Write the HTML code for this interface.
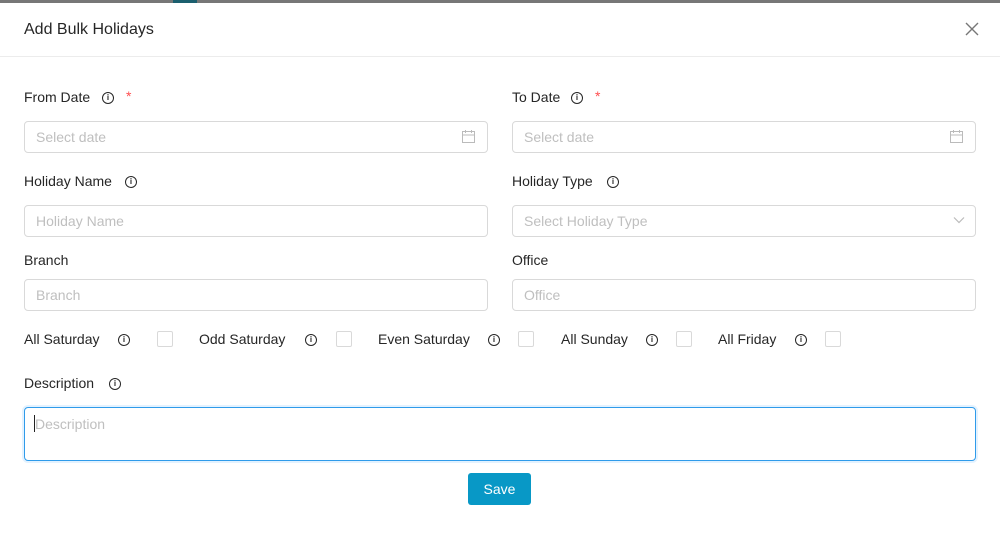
<!DOCTYPE html>
<html><head><style>
body{margin:0;width:1000px;height:540px;background:#fff;font-family:"Liberation Sans",sans-serif;color:#262626;position:relative;overflow:hidden;font-size:14px}
.topbar{position:absolute;left:0;top:0;width:1000px;height:3px;background:#777}
.topbar i{position:absolute;left:173px;top:0;width:24px;height:3px;background:#1b5f6e}
.a{position:absolute}
.lbl{position:absolute;font-size:14px;color:#262626;line-height:20px}
.info{display:inline-block;width:10px;height:10px;border:1.3px solid #262626;border-radius:50%;position:absolute;font-size:8px;line-height:10px;text-align:center;font-weight:bold}
.inp{position:absolute;height:30px;border:1px solid #d9d9d9;border-radius:4px;box-sizing:border-box;height:32px;color:#bfbfbf;font-size:14px;line-height:30px;padding-left:11px}
.cb{position:absolute;width:16px;height:16px;border:1px solid #d9d9d9;border-radius:2px;box-sizing:border-box;top:331px}
.req{position:absolute;color:#ff4d4f;font-size:14px}
</style></head><body>
<div class="topbar"><i></i></div>
<div class="lbl" style="left:24px;top:19px;font-size:16px;line-height:22px">Add Bulk Holidays</div>
<svg class="a" style="left:965px;top:22px" width="14" height="14" viewBox="0 0 14 14"><path d="M1 1L13 13M13 1L1 13" stroke="#777" stroke-width="1.4"/></svg>
<div class="a" style="left:0;top:56px;width:1000px;height:1px;background:#ececec"></div>

<div class="lbl" style="left:24px;top:87px">From Date</div><span class="info" style="left:102px;top:92px">i</span><span class="req" style="left:126px;top:88px">*</span>
<div class="lbl" style="left:512px;top:87px">To Date</div><span class="info" style="left:571px;top:92px">i</span><span class="req" style="left:595px;top:88px">*</span>
<div class="inp" style="left:24px;top:121px;width:464px">Select date</div>
<div class="inp" style="left:512px;top:121px;width:464px">Select date</div>
<svg class="a" style="left:462px;top:130px" width="13" height="13" viewBox="0 0 13 13"><rect x="0.5" y="1.5" width="12" height="11" fill="none" stroke="#bbb"/><path d="M0.5 5H12.5M3.5 0V3M9.5 0V3" stroke="#bbb"/></svg>
<svg class="a" style="left:950px;top:130px" width="13" height="13" viewBox="0 0 13 13"><rect x="0.5" y="1.5" width="12" height="11" fill="none" stroke="#bbb"/><path d="M0.5 5H12.5M3.5 0V3M9.5 0V3" stroke="#bbb"/></svg>

<div class="lbl" style="left:24px;top:171px">Holiday Name</div><span class="info" style="left:125px;top:176px">i</span>
<div class="lbl" style="left:512px;top:171px">Holiday Type</div><span class="info" style="left:607px;top:176px">i</span>
<div class="inp" style="left:24px;top:205px;width:464px">Holiday Name</div>
<div class="inp" style="left:512px;top:205px;width:464px">Select Holiday Type</div>
<svg class="a" style="left:953px;top:216px" width="12" height="8" viewBox="0 0 12 8"><path d="M1 1.5L6 6.5L11 1.5" fill="none" stroke="#bbb" stroke-width="1.2"/></svg>

<div class="lbl" style="left:24px;top:250px">Branch</div>
<div class="lbl" style="left:512px;top:250px">Office</div>
<div class="inp" style="left:24px;top:279px;width:464px">Branch</div>
<div class="inp" style="left:512px;top:279px;width:464px">Office</div>

<div class="lbl" style="left:24px;top:329px">All Saturday</div><span class="info" style="left:118px;top:334px">i</span><div class="cb" style="left:157px"></div>
<div class="lbl" style="left:199px;top:329px">Odd Saturday</div><span class="info" style="left:305px;top:334px">i</span><div class="cb" style="left:336px"></div>
<div class="lbl" style="left:378px;top:329px">Even Saturday</div><span class="info" style="left:488px;top:334px">i</span><div class="cb" style="left:518px"></div>
<div class="lbl" style="left:561px;top:329px">All Sunday</div><span class="info" style="left:646px;top:334px">i</span><div class="cb" style="left:676px"></div>
<div class="lbl" style="left:718px;top:329px">All Friday</div><span class="info" style="left:795px;top:334px">i</span><div class="cb" style="left:825px"></div>

<div class="lbl" style="left:24px;top:373px">Description</div><span class="info" style="left:109px;top:378px">i</span>
<div class="a" style="left:24px;top:407px;width:952px;height:54px;border:1px solid #2f9bea;border-radius:4px;box-sizing:border-box;box-shadow:0 0 0 2px rgba(24,144,255,0.12)"></div>
<div class="a" style="left:35px;top:414px;color:#bfbfbf;line-height:20px">Description</div>
<div class="a" style="left:34px;top:415px;width:1px;height:17px;background:#222"></div>
<div class="a" style="left:468px;top:473px;width:63px;height:32px;background:#0898c6;border-radius:3px;color:#fff;text-align:center;line-height:32px">Save</div>
</body></html>
